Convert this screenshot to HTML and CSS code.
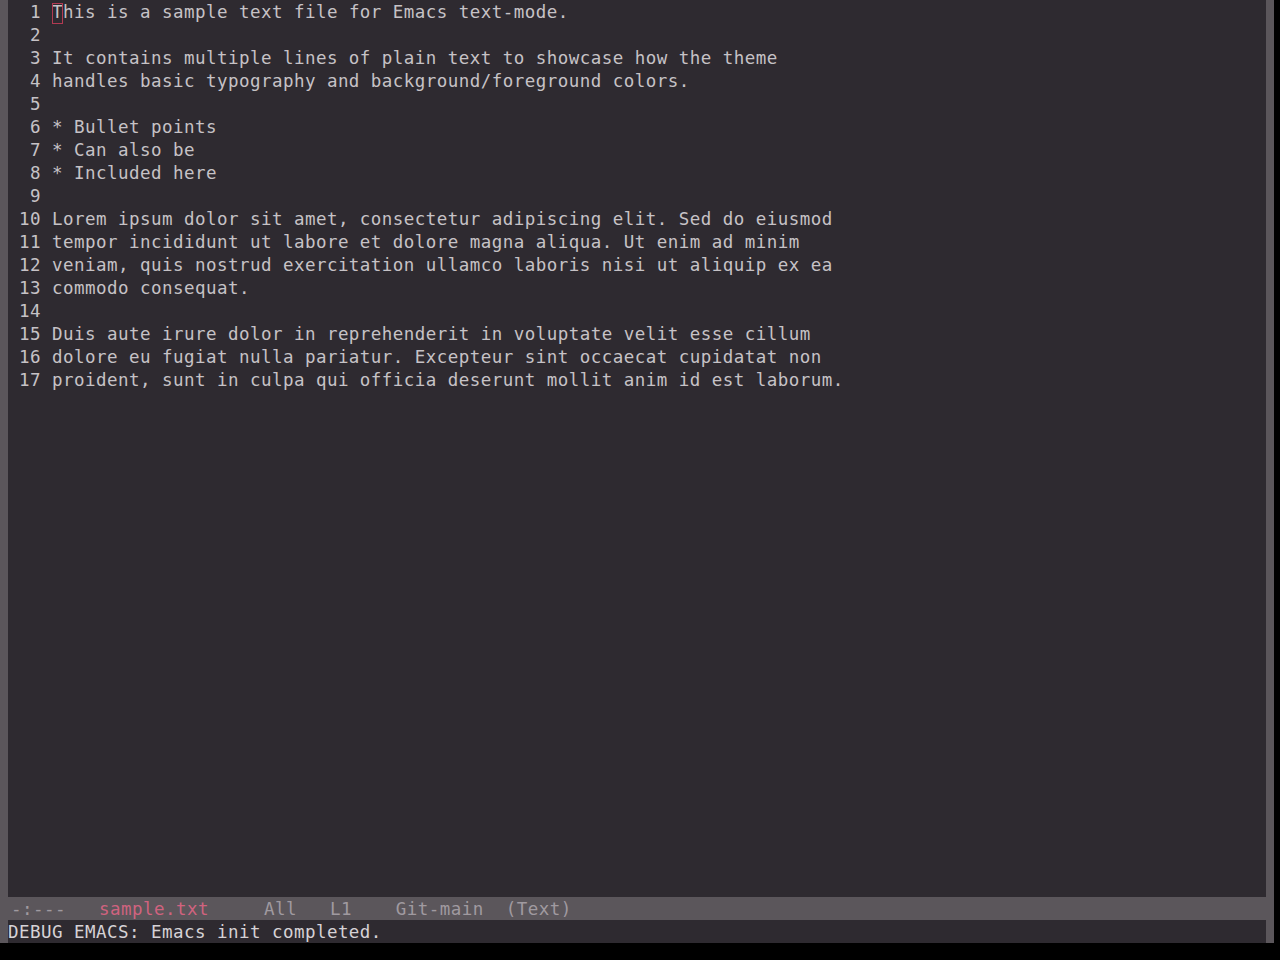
FILE: index.html
```html
<!DOCTYPE html>
<html lang="en">
<head>
<meta charset="utf-8">
<title>sample.txt - Emacs</title>
<link rel="stylesheet" href="styles.css">
</head>
<body>
<div class="frame">
  <main class="buffer">
    <div class="line"><span class="ln">  1 </span><span class="cursor">T</span>his is a sample text file for Emacs text-mode.</div>
    <div class="line"><span class="ln">  2 </span></div>
    <div class="line"><span class="ln">  3 </span>It contains multiple lines of plain text to showcase how the theme</div>
    <div class="line"><span class="ln">  4 </span>handles basic typography and background/foreground colors.</div>
    <div class="line"><span class="ln">  5 </span></div>
    <div class="line"><span class="ln">  6 </span>* Bullet points</div>
    <div class="line"><span class="ln">  7 </span>* Can also be</div>
    <div class="line"><span class="ln">  8 </span>* Included here</div>
    <div class="line"><span class="ln">  9 </span></div>
    <div class="line"><span class="ln"> 10 </span>Lorem ipsum dolor sit amet, consectetur adipiscing elit. Sed do eiusmod</div>
    <div class="line"><span class="ln"> 11 </span>tempor incididunt ut labore et dolore magna aliqua. Ut enim ad minim</div>
    <div class="line"><span class="ln"> 12 </span>veniam, quis nostrud exercitation ullamco laboris nisi ut aliquip ex ea</div>
    <div class="line"><span class="ln"> 13 </span>commodo consequat.</div>
    <div class="line"><span class="ln"> 14 </span></div>
    <div class="line"><span class="ln"> 15 </span>Duis aute irure dolor in reprehenderit in voluptate velit esse cillum</div>
    <div class="line"><span class="ln"> 16 </span>dolore eu fugiat nulla pariatur. Excepteur sint occaecat cupidatat non</div>
    <div class="line"><span class="ln"> 17 </span>proident, sunt in culpa qui officia deserunt mollit anim id est laborum.</div>
  </main>
  <div class="modeline">-:---   <span class="bufname">sample.txt</span>     All   L1    Git-main  (Text)</div>
  <div class="echo">DEBUG EMACS: Emacs init completed.</div>
</div>
</body>
</html>
```
FILE: styles.css
```css
html, body {
  margin: 0;
  padding: 0;
  background: #000000;
}

.frame {
  width: 1274px;
  height: 943px;
  box-sizing: border-box;
  padding: 0 8px;
  background: #5b565b;
  display: flex;
  flex-direction: column;
  overflow: hidden;
  font-family: "DejaVu Sans Mono", monospace;
  font-size: 17.5px;
  letter-spacing: 0.46px;
  line-height: 23px;
}

.buffer {
  flex: 1;
  background: #2e2a30;
  color: #c6c2c6;
}

.line {
  height: 23px;
  box-sizing: border-box;
  padding-top: 1px;
  white-space: pre;
}

.ln {
  color: #c6c2c6;
}

.cursor {
  position: relative;
}

.cursor::after {
  content: "";
  position: absolute;
  left: 0;
  top: 1px;
  width: 11px;
  height: 21px;
  box-sizing: border-box;
  border: 1px solid #b23a52;
}

.modeline {
  height: 23px;
  flex: none;
  box-sizing: border-box;
  padding: 1px 0 0 3px;
  line-height: 22px;
  white-space: pre;
  background: #5b565b;
  color: #a09aa0;
}

.bufname {
  color: #d0637f;
}

.echo {
  height: 23px;
  flex: none;
  box-sizing: border-box;
  padding-top: 1px;
  line-height: 22px;
  white-space: pre;
  background: #2e2a30;
  color: #d6d2d6;
}
```
